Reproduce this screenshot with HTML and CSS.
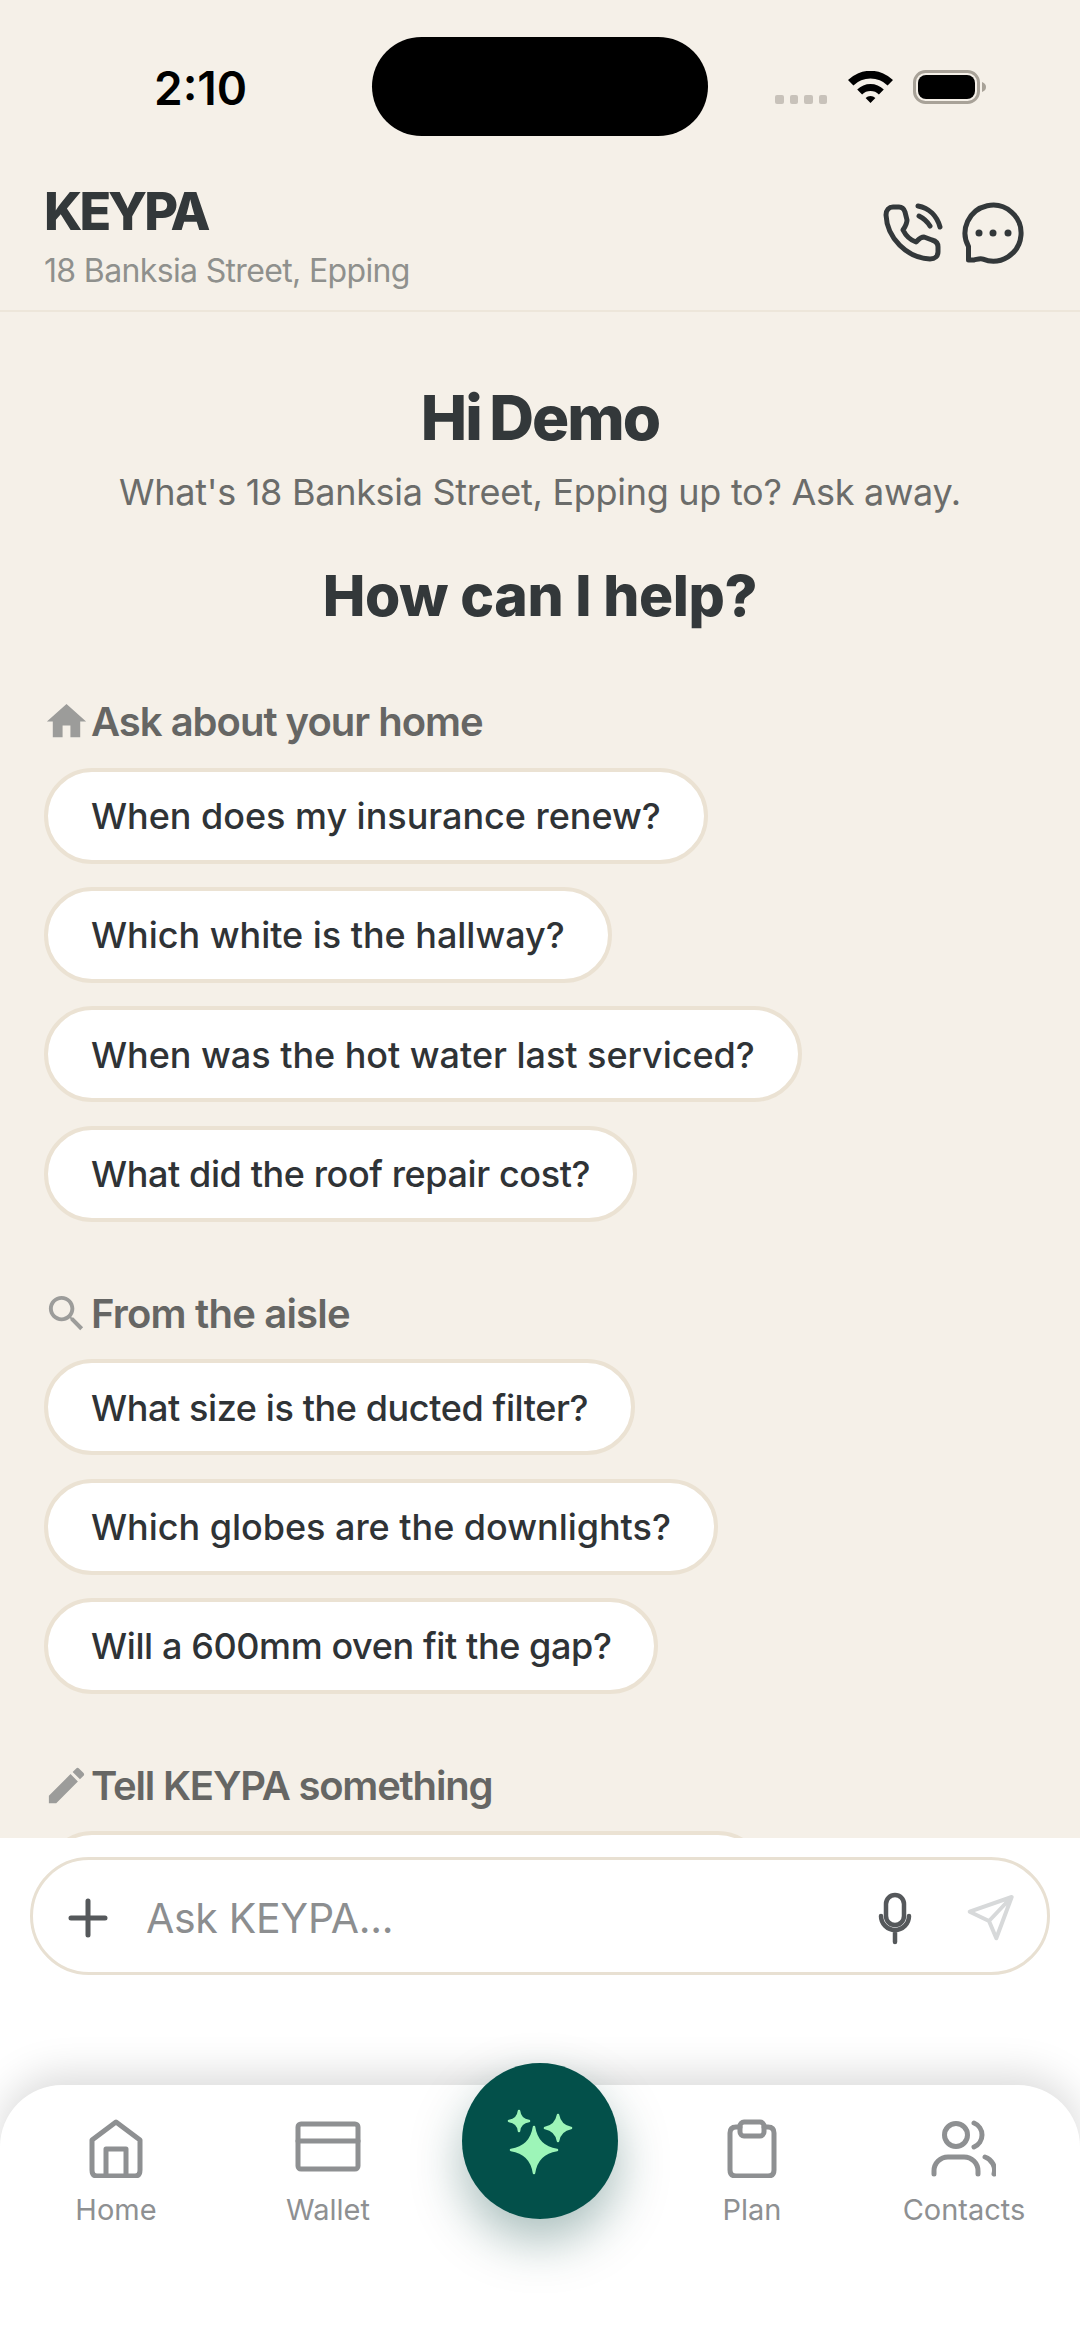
FILE: index.html
```html
<!DOCTYPE html>
<html>
	<head>
		<meta charset="utf-8" />
		<title>KEYPA</title>
		<link rel="stylesheet" href="styles.css">
	</head>
	<body>
<div class="phone">
    <div class="status">
        <span class="time">2:10</span>
        <div class="island"></div>
        <div class="status-right">
            <div class="signal"><i></i><i></i><i></i><i></i></div>
            <svg class="wifi" viewBox="0 0 45 32"><path d="M0 9A32 32 0 0 1 45 9L39.6 14.5A24.5 24.5 0 0 0 5.4 14.5ZM9.2 18.4A19 19 0 0 1 35.8 18.4L30.9 23.4A12 12 0 0 0 14.1 23.4ZM17.6 27A7 7 0 0 1 27.4 27L22.5 32Z"/></svg>
            <svg class="battery" viewBox="0 0 74 34"><rect x="1.5" y="1.5" width="64" height="31" rx="11" fill="none" stroke="#a8a298" stroke-width="3"/><rect x="5" y="5" width="57" height="24" rx="8" fill="#000"/><path d="M69 12c3 1 4 3 4 5s-1 4-4 5z" fill="#a8a298"/></svg>
        </div>
    </div>

    <div class="header">
        <div>
            <div class="brand">KEYPA</div>
            <div class="address">18 Banksia Street, Epping</div>
        </div>
        <div class="header-icons">
            <svg class="ic-phone" viewBox="0 0 64 64"><path d="M5 16C5 11 8 8 12 8H18C21 8 23 10 24 13L26 21C26 25 24 28 22 31C25 37 29 41 35 43C37 41 39 38 43 38L51 41C55 42 57 45 57 48V53C57 57 54 60 49 60C26 59 6 39 5 16ZM37 7C48 9 56 17 59 28M38 17C42 19 46 22 49 27"/></svg>
            <svg class="ic-chat" viewBox="0 0 68 68"><path d="M9.5 47.5A28 28 0 1 1 24 60.2C21 59 18 60.5 15 61H9.5Z"/><circle class="dot" cx="20" cy="34" r="3.5"/><circle class="dot" cx="34" cy="34" r="3.5"/><circle class="dot" cx="49" cy="34" r="3.5"/></svg>
        </div>
    </div>

    <div class="main">
        <h1>Hi Demo</h1>
        <p class="lead">What's 18 Banksia Street, Epping up to? Ask away.</p>
        <h2>How can I help?</h2>

        <div class="section">
            <div class="label label-home">
                <svg viewBox="0 0 24 24"><path d="M10 20v-6h4v6h5v-8h3L12 3 2 12h3v8z"/></svg>
                Ask about your home
            </div>
            <div class="pills">
                <div class="pill">When does my insurance renew?</div>
                <div class="pill">Which white is the hallway?</div>
                <div class="pill">When was the hot water last serviced?</div>
                <div class="pill tight">What did the roof repair cost?</div>
            </div>
        </div>

        <div class="section">
            <div class="label">
                <svg viewBox="0 0 24 24"><path d="M15.5 14h-.79l-.28-.27C15.41 12.59 16 11.11 16 9.5 16 5.91 13.09 3 9.5 3S3 5.91 3 9.5 5.91 16 9.5 16c1.61 0 3.09-.59 4.23-1.57l.27.28v.79l5 4.99L20.49 19l-4.99-5zm-6 0C7.01 14 5 11.99 5 9.5S7.01 5 9.5 5 14 7.01 14 9.5 11.99 14 9.5 14z"/></svg>
                From the aisle
            </div>
            <div class="pills">
                <div class="pill tight">What size is the ducted filter?</div>
                <div class="pill">Which globes are the downlights?</div>
                <div class="pill tight">Will a 600mm oven fit the gap?</div>
            </div>
        </div>

        <div class="section">
            <div class="label label-tight">
                <svg viewBox="0 0 24 24"><path d="M3 17.25V21h3.75L17.81 9.94l-3.75-3.75L3 17.25zM20.71 7.04c.39-.39.39-1.02 0-1.41l-2.34-2.34c-.39-.39-1.02-.39-1.41 0l-1.83 1.83 3.75 3.75 1.83-1.83z"/></svg>
                Tell KEYPA something
            </div>
            <div class="pills">
                <div class="pill pill-cut"></div>
            </div>
        </div>
    </div>

    <div class="composer">
        <div class="input">
            <svg class="ic-plus" viewBox="0 0 40 40"><path d="M3 20H37M20 3V37"/></svg>
            <span class="placeholder">Ask KEYPA...</span>
            <svg class="ic-mic" viewBox="0 0 40 54"><rect x="11" y="4" width="18" height="30" rx="9"/><path d="M6 25a14 14 0 0 0 28 0M20 39V51"/></svg>
            <svg class="ic-send" viewBox="0 0 52 52"><path d="M46.7 5L4.7 19.700L24 29L31.300 46.300ZM46.700 5L24 29"/></svg>
        </div>
    </div>

    <div class="nav">
        <div class="nav-item">
            <svg viewBox="0 0 62 62"><path d="M31 6L55 24V54Q55 60 50 60H12Q7 60 7 54V24ZM21 60V33H41V60"/></svg>
            <span>Home</span>
        </div>
        <div class="nav-item">
            <svg viewBox="0 0 70 62"><rect x="5" y="8" width="60" height="45" rx="3"/><path d="M5 25H65"/></svg>
            <span>Wallet</span>
        </div>
        <div class="nav-gap"></div>
        <div class="nav-item">
            <svg viewBox="0 0 62 62"><path d="M19 11H15Q9 11 9 17V54Q9 60 15 60H47Q53 60 53 54V17Q53 11 47 11H43"/><rect x="19" y="6" width="24" height="14" rx="4"/></svg>
            <span>Plan</span>
        </div>
        <div class="nav-item contacts">
            <svg viewBox="0 0 70 62"><circle cx="30" cy="19" r="11.500"/><path d="M48 7A13 13 0 0 1 48 31M8 58V55A14 14 0 0 1 22 41H38A14 14 0 0 1 52 55V58M59 41A14 14 0 0 1 68 58"/></svg>
            <span>Contacts</span>
        </div>
        <div class="fab">
            <svg viewBox="0 0 70 70"><path d="M29 21Q32 41 52 44Q32 47 29 67Q26 47 6 44Q26 41 29 21ZM14 5Q15 14 24 15Q15 16 14 25Q13 16 4 15Q13 14 14 5ZM53 9Q55 20 66 22Q55 24 53 35Q51 24 40 22Q51 20 53 9Z"/></svg>
        </div>
    </div>
</div>
	</body>
</html>
```
FILE: styles.css
```css
* {
    margin: 0;
    padding: 0;
    box-sizing: border-box;
}
body {
    background: #f5f0e8;
    font-family: Inter, "Liberation Sans", sans-serif;
}
.phone {
    width: 1080px;
    height: 2348px;
    display: flex;
    flex-direction: column;
    overflow: hidden;
    background: #fff;
}

/* status bar */
.status {
    height: 176px;
    flex: none;
    padding: 37px 0 0 154px;
    background: #f5f0e8;
    display: flex;
    align-items: flex-start;
}
.time {
    width: 218px;
    margin-top: 24px;
    font-size: 46px;
    line-height: 54px;
    font-weight: 600;
    color: #000;
}
.island {
    width: 336px;
    height: 99px;
    background: #000;
    border-radius: 50px;
}
.status-right {
    height: 99px;
    display: flex;
    align-items: flex-start;
    margin-left: 67px;
}
.signal {
    display: flex;
    gap: 6px;
    margin-top: 58px;
    margin-right: 21px;
}
.signal i {
    width: 8.500px;
    height: 8.500px;
    border-radius: 2px;
    background: #c8c2ba;
}
.wifi {
    width: 45px;
    height: 32px;
    margin-top: 34px;
    margin-right: 20px;
}
.battery {
    width: 74px;
    height: 34px;
    margin-top: 33px;
}

/* header */
.header {
    flex: none;
    height: 136px;
    padding: 0 53px 0 44px;
    background: #f5f0e8;
    border-bottom: 2px solid #ede6da;
    display: flex;
    justify-content: space-between;
    align-items: flex-start;
}
.brand {
    margin-top: 6px;
    font-size: 52px;
    line-height: 60px;
    font-weight: 800;
    letter-spacing: -3px;
    color: #33383a;
}
.address {
    margin-top: 9px;
    font-size: 32px;
    line-height: 40px;
    letter-spacing: -0.650px;
    color: #8f908d;
}
.header-icons {
    display: flex;
    align-items: flex-start;
    margin-top: 23px;
    gap: 14px;
}
.header-icons svg {
    fill: none;
    stroke: #33383a;
    stroke-width: 5;
    stroke-linejoin: round;
    stroke-linecap: round;
}
.ic-phone {
    width: 64px;
    height: 64px;
}
.ic-chat {
    width: 68px;
    height: 68px;
}
.header-icons .dot {
    fill: #33383a;
    stroke: none;
}

/* scrolling part */
.main {
    flex: 1;
    min-height: 0;
    overflow: hidden;
    padding: 70px 44px 0;
    background: #f5f0e8;
}
h1 {
    font-size: 62px;
    line-height: 72px;
    font-weight: 800;
    letter-spacing: -2px;
    word-spacing: -3px;
    text-align: center;
    color: #33383a;
}
.lead {
    margin-top: 16px;
    font-size: 36px;
    line-height: 44px;
    letter-spacing: -0.280px;
    text-align: center;
    color: #6b6c6a;
}
h2 {
    margin-top: 48px;
    font-size: 57px;
    line-height: 68px;
    font-weight: 800;
    letter-spacing: -0.400px;
    text-align: center;
    color: #33383a;
}
.section {
    margin-top: 67.500px;
}
.label {
    display: flex;
    align-items: center;
    gap: 1px;
    height: 48px;
    font-size: 40px;
    font-weight: 600;
    letter-spacing: -0.800px;
    color: #666664;
}
.label-home {
    letter-spacing: -1px;
}
.label-tight {
    letter-spacing: -1.200px;
}
.label svg {
    width: 47px;
    height: 47px;
    margin-left: -1px;
    fill: #9c9c9a;
}
.pills {
    margin-top: 22px;
    display: flex;
    flex-direction: column;
    align-items: flex-start;
    gap: 23.400px;
}
.pill {
    height: 96px;
    padding: 1px 43px 0;
    background: #fff;
    border: 4px solid #ebe2d3;
    border-radius: 48px;
    display: flex;
    align-items: center;
    font-size: 36px;
    font-weight: 500;
    letter-spacing: -0.030px;
    color: #2f3336;
}
.tight {
    letter-spacing: -0.400px;
}
.pill-cut {
    width: 722px;
}

/* ask box */
.composer {
    flex: none;
    height: 247px;
    padding: 19px 30px 0;
    background: #fff;
}
.input {
    height: 118px;
    padding: 4px 30px 0 35px;
    border: 3px solid #e8e0d2;
    border-radius: 59px;
    display: flex;
    align-items: center;
}
.input svg {
    flex: none;
    fill: none;
    stroke-linecap: round;
    stroke-linejoin: round;
}
.ic-plus {
    width: 40px;
    height: 40px;
    stroke: #55585b;
    stroke-width: 5;
}
.placeholder {
    flex: 1;
    margin-left: 38px;
    font-size: 41px;
    letter-spacing: -0.300px;
    color: #8c8e90;
}
.ic-mic {
    width: 40px;
    height: 54px;
    stroke: #55585b;
    stroke-width: 4.500;
}
.ic-send {
    width: 52px;
    height: 52px;
    margin-left: 50px;
    stroke: #d7d9da;
    stroke-width: 4;
}

/* bottom nav */
.nav {
    flex: none;
    position: relative;
    height: 263px;
    padding: 31px 10px 0;
    background: #fff;
    border-radius: 62px 62px 0 0;
    box-shadow: 0 -10px 40px rgba(0, 0, 0, 0.15);
    display: grid;
    grid-template-columns: repeat(5, 1fr);
    align-items: start;
}
.nav-item {
    display: flex;
    flex-direction: column;
    align-items: center;
    font-size: 29px;
    line-height: 34px;
    color: #8e9092;
}
.nav-item svg {
    height: 62px;
    margin-bottom: 15px;
    fill: none;
    stroke: #8e9092;
    stroke-width: 5;
    stroke-linejoin: round;
    stroke-linecap: round;
}
.contacts svg {
    margin-left: -6px;
}
.fab {
    position: absolute;
    left: 462px;
    top: -22px;
    width: 156px;
    height: 156px;
    border-radius: 50%;
    background: #03504a;
    box-shadow: 0 22px 50px rgba(3, 65, 60, 0.34);
    display: flex;
    align-items: center;
    justify-content: center;
}
.fab svg {
    width: 70px;
    height: 70px;
    fill: #9df5b8;
    stroke: #9df5b8;
    stroke-width: 2.500;
    stroke-linejoin: round;
}
```
